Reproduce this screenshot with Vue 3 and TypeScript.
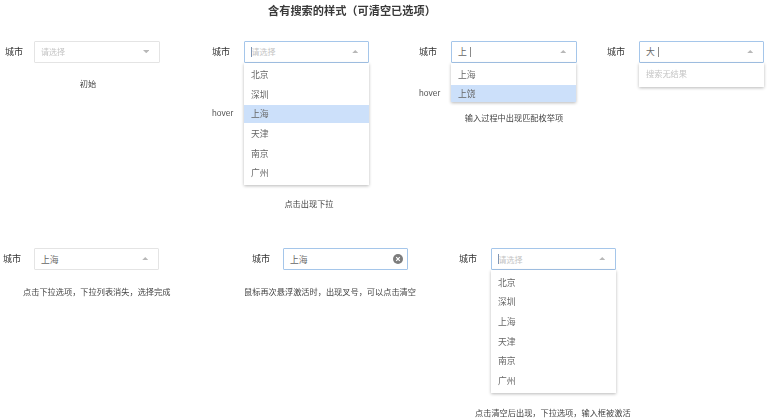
<script setup lang="ts">
type Field = {
  cls: string
  value?: string
  open?: boolean
  caret?: boolean
  clear?: boolean
  options?: string[]
  hoverIndex?: number
  empty?: string
  hoverLabel?: boolean
  note: string
}
const cities = ['北京', '深圳', '上海', '天津', '南京', '广州']
const top: Field[] = [
  { cls: 'a1', note: '初始' },
  { cls: 'a2', open: true, caret: true, options: cities, hoverIndex: 2, hoverLabel: true, note: '点击出现下拉' },
  { cls: 'a3', open: true, value: '上', caret: true, options: ['上海', '上饶'], hoverIndex: 1, hoverLabel: true, note: '输入过程中出现匹配枚举项' },
  { cls: 'a4', open: true, value: '大', caret: true, empty: '搜索无结果', note: '' },
]
const bottom: Field[] = [
  { cls: 'b1', value: '上海', note: '点击下拉选项，下拉列表消失，选择完成' },
  { cls: 'b2', value: '上海', clear: true, note: '鼠标再次悬浮激活时，出现叉号，可以点击清空' },
  { cls: 'b3', open: true, caret: true, options: cities, note: '点击清空后出现，下拉选项，输入框被激活' },
]
const rows = [
  { cls: 'row-top', fields: top },
  { cls: 'row-bottom', fields: bottom },
]
</script>

<template>
  <main class="page">
    <h1 class="title">含有搜索的样式（可清空已选项）</h1>
    <section v-for="row in rows" :key="row.cls" class="row" :class="row.cls">
      <div v-for="f in row.fields" :key="f.cls" class="field" :class="f.cls">
        <div class="line">
          <span class="label">城市</span>
          <div class="select" :class="{ active: f.open || f.clear }">
            <span v-if="f.caret && !f.value" class="caret"></span>
            <span v-if="f.value" class="value">{{ f.value }}</span>
            <span v-else class="placeholder">请选择</span>
            <span v-if="f.caret && f.value" class="caret after"></span>
            <svg v-if="f.clear" class="clear" viewBox="0 0 10 10" width="10" height="10">
              <circle cx="5" cy="5" r="5" fill="#7d7d7d" />
              <path d="M3.2 3.2 6.8 6.8M6.8 3.2 3.2 6.8" stroke="#fff" stroke-width="1.2" />
            </svg>
            <svg v-else class="arrow" viewBox="0 0 8 4" width="6.5" height="3.25">
              <path :d="f.open || f.value ? 'M4 0 8 4H0Z' : 'M0 0H8L4 4Z'" fill="#b8b8b8" />
            </svg>
          </div>
        </div>
        <div v-if="f.options || f.empty" class="panel">
          <div
            v-for="(o, i) in f.options"
            :key="o"
            class="option"
            :class="{ hovered: i === f.hoverIndex }"
          >
            {{ o }}
            <span v-if="f.hoverLabel && i === f.hoverIndex" class="hover-tag">hover</span>
          </div>
          <div v-if="f.empty" class="option none">{{ f.empty }}</div>
        </div>
        <p v-if="f.note" class="note">{{ f.note }}</p>
      </div>
    </section>
  </main>
</template>

<style>
html, body { margin: 0; background: #fff; }
</style>

<style scoped>
.page {
  width: 769px;
  height: 420px;
  overflow: hidden;
  position: relative;
  font-family: "Noto Sans CJK SC", "Liberation Sans", sans-serif;
  color: #555;
  filter: blur(0.35px);
}
.title {
  margin: 0;
  padding-top: 2px;
  padding-left: 268px;
  font-size: 11.2px;
  line-height: 16px;
  font-weight: 700;
  color: #3a3a3a;
}
.row { display: flex; align-items: flex-start; }
.row-top { margin-top: 22.5px; height: 207.5px; }
.row-bottom { height: 172px; }
.field { flex: none; }
.line { display: flex; align-items: center; }
.label {
  width: 32px;
  font-size: 9px;
  line-height: 12px;
  color: #333;
  flex: none;
}
.select {
  width: 126px;
  height: 22px;
  box-sizing: border-box;
  border: 1px solid #e4e4e4;
  border-radius: 1px;
  padding: 0 6px;
  display: flex;
  align-items: center;
  position: relative;
  font-size: 8.8px;
  background: #fff;
}
.select.active { border-color: #a5c6ea; }
.value { color: #666; }
.placeholder { color: #c4c4c4; font-size: 8px; }
.caret { width: 1px; height: 10px; background: #7f95b5; flex: none; margin-right: -0.5px; }
.caret.after { margin: 0 0 0 3px; background: #8a8a8a; }
.arrow { position: absolute; right: 10px; top: 8px; }
.clear { position: absolute; right: 4px; top: 5px; }
.panel {
  margin-left: 32px;
  width: 125px;
  padding: 2.5px 0 2px;
  background: #fff;
  box-shadow: 0 1px 3px rgba(0, 0, 0, 0.28);
  position: relative;
}
.option {
  height: 19.7px;
  line-height: 19.7px;
  padding-left: 7px;
  font-size: 8.8px;
  color: #666;
  position: relative;
}
.option.hovered { background: #cce0fa; height: 17.5px; line-height: 17.5px; margin: 1.1px 0; }
.option.none { color: #c4c4c4; font-size: 8.2px; }
.hover-tag {
  position: absolute;
  left: -32px;
  top: 0;
  font-family: "Liberation Sans", sans-serif;
  font-size: 8.5px;
  color: #555;
}
.note {
  margin: 0;
  font-size: 8.2px;
  line-height: 12px;
  color: #444;
  text-align: center;
  white-space: nowrap;
}
.a1 { margin-left: 5px; width: 155px; }
.a1 .label { width: 29px; }
.a1 .note { margin-top: 14.5px; padding-left: 11px; }
.a2 { margin-left: 52px; width: 157px; }
.a2 .note { margin-top: 12px; padding-left: 37px; }
.a3 { margin-left: 50px; width: 158px; }
.a3 .option.hovered { margin: 0; }
.a3 .panel { padding-bottom: 0; }
.a3 .note { margin-top: 9px; padding-left: 32px; }
.a4 { margin-left: 30px; width: 157px; }
.a4 .panel { padding-top: 1.5px; padding-bottom: 3px; }
.b1 { margin-left: 3px; width: 156px; }
.b1 .label { width: 31px; }
.b1 .note { margin-top: 15px; padding-left: 20px; text-align: left; }
.b2 { margin-left: 93px; width: 156px; }
.b2 .label { width: 31px; }
.b2 .note { margin-top: 15px; margin-left: -8px; text-align: left; }
.b3 { margin-left: 51px; width: 157px; }
.b3 .note { margin-top: 13px; margin-left: 16px; text-align: left; }
</style>
